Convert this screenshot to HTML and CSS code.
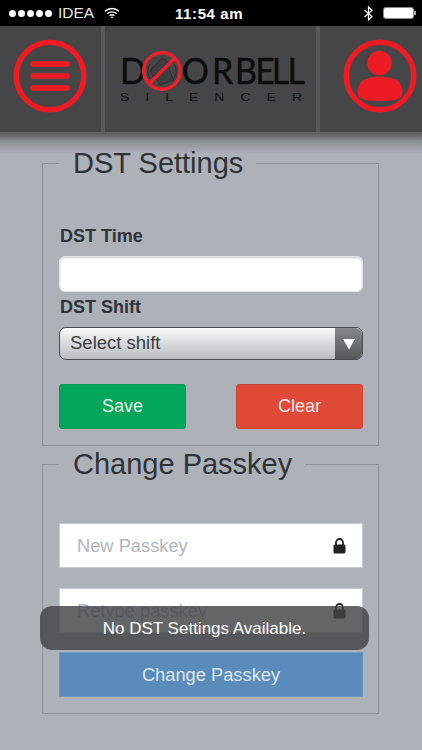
FILE: index.html
```html
<!DOCTYPE html>
<html lang="en">
<head>
<meta charset="utf-8">
<title>DST Settings</title>
<link rel="stylesheet" href="styles.css">
</head>
<body>
<div class="screen">
  <div class="status">
    <div class="status-left">
      <span class="dots"><i></i><i></i><i></i><i></i><i></i></span>
      <span class="carrier">IDEA</span>
      <svg class="wifi" width="16" height="12" viewBox="0 0 16 12"><path d="M1 4.200C5 .6 11 .6 15 4.200M3.300 6.600c2.700-2.400 6.700-2.400 9.400 0M5.600 8.800c1.400-1.200 3.400-1.200 4.800 0" fill="none" stroke="#fff" stroke-width="1.300"/><path d="M8 11.500 6.700 10.100c.8-.6 1.800-.6 2.600 0z" fill="#fff"/></svg>
    </div>
    <div class="clock">11:54 am</div>
    <div class="status-right">
      <svg width="11" height="15" viewBox="0 0 11 15"><path d="M1.500 4 9 10.500 5.500 14V1L9 4.500 1.500 11" fill="none" stroke="#fff" stroke-width="1.200"/></svg>
      <span class="battery"><span class="battery-fill"></span></span>
    </div>
  </div>

  <header class="topbar">
    <div class="tile tile-menu">
      <svg width="74" height="74" viewBox="0 0 74 74"><circle cx="37" cy="37" r="33.800" fill="none" stroke="#ed1c24" stroke-width="5.500"/><path d="M20 25h34M20 37h34M20 49h34" stroke="#ed1c24" stroke-width="5.500" stroke-linecap="round"/></svg>
    </div>
    <div class="tile tile-logo">
      <svg width="196" height="56" viewBox="0 0 196 56">
        <text class="logo-main" transform="scale(.92 1)" x="0 24 67 100 125 147 165 182" y="33">DOORBELL</text>
        <text class="logo-sub" transform="scale(1.4 1)" x="0" y="50" textLength="130">SILENCER</text>
        <circle cx="42" cy="20" r="18.200" fill="#464648"/>
        <g fill="none" stroke="#2f2f31" stroke-width="1">
          <path d="M42 7l5 3 4 14 3 5-14 5-3-5-7-9z" fill="#3e3e40"/>
          <path d="M33 15a11 11 0 0 0 0 11M30 13a15 15 0 0 0 0 15M54 13a12 12 0 0 1 0 14M57 11a16 16 0 0 1 0 18"/>
        </g>
        <circle cx="42" cy="20" r="18.200" fill="none" stroke="#ed2229" stroke-width="3.500"/>
        <path d="M29 33 55 7" stroke="#ed2229" stroke-width="3.500"/>
      </svg>
    </div>
    <div class="tile tile-user">
      <svg width="74" height="74" viewBox="0 0 74 74"><circle cx="37" cy="37" r="33.800" fill="none" stroke="#ed1c24" stroke-width="5.500"/><path d="M36.500 36c-5 3-9 2-14 4-5 2-8 7-8 13 0 4 3 7 8 8 9 1.500 20 1.500 29 0 5-1 8-4 8-8 0-6-3-11-8-13-5-2-10-1-15-4z" fill="#ed1c24"/><circle cx="36.500" cy="24" r="13" fill="#ed1c24" stroke="#464648" stroke-width="1.500"/></svg>
    </div>
  </header>
  <div class="bar-shadow"></div>

  <main class="content">
    <fieldset class="panel panel-dst">
      <legend>DST Settings</legend>
      <label class="field-label label-time" for="dst-time">DST Time</label>
      <input class="text-input" id="dst-time" type="text">
      <label class="field-label label-shift">DST Shift</label>
      <div class="select">
        <span class="select-value">Select shift</span>
        <span class="select-arrow"><svg width="14" height="12" viewBox="0 0 14 12"><path d="M1 1h12L7 11.500z" fill="#fff"/></svg></span>
      </div>
      <div class="actions">
        <button class="btn btn-save" type="button">Save</button>
        <button class="btn btn-clear" type="button">Clear</button>
      </div>
    </fieldset>

    <fieldset class="panel panel-pass">
      <legend>Change Passkey</legend>
      <div class="pass-row pass-first">
        <input class="pass-input" type="password" placeholder="New Passkey">
        <svg class="lock" width="13" height="16" viewBox="0 0 13 16"><path d="M3 7V4.500a3.500 3.500 0 0 1 7 0V7" fill="none" stroke="#222" stroke-width="1.800"/><rect x=".5" y="6.500" width="12" height="9" rx="1.500" fill="#222"/></svg>
      </div>
      <div class="pass-row">
        <input class="pass-input" type="password" placeholder="Retype passkey">
        <svg class="lock" width="13" height="16" viewBox="0 0 13 16"><path d="M3 7V4.500a3.500 3.500 0 0 1 7 0V7" fill="none" stroke="#222" stroke-width="1.800"/><rect x=".5" y="6.500" width="12" height="9" rx="1.500" fill="#222"/></svg>
      </div>
      <button class="btn-wide" type="button">Change Passkey</button>
    </fieldset>
  </main>

  <div class="toast">No DST Settings Available.</div>
</div>
</body>
</html>
```
FILE: styles.css
```css
* { box-sizing: border-box; }
html, body { margin: 0; padding: 0; }
body { width: 422px; height: 750px; overflow: hidden; font-family: "Liberation Sans", Arial, sans-serif; background: #adb1b8; }
.screen { position: relative; width: 422px; height: 750px; overflow: hidden; background: #adb1b8; }

.status { height: 26px; background: #000; color: #fff; display: flex; align-items: center; justify-content: space-between; padding: 0 9px 0 9px; position: relative; }
.status-left { display: flex; align-items: center; width: 150px; }
.dots { display: flex; gap: 2px; margin-right: 6px; }
.dots i { display: block; width: 7px; height: 7px; border-radius: 50%; background: #fff; }
.carrier { font-size: 15.500px; color: #e8e8e8; margin-right: 10px; }
.clock { font-size: 15px; font-weight: 700; letter-spacing: .6px; position: absolute; left: 175px; top: 5px; }
.status-right { display: flex; align-items: center; gap: 10px; }
.battery { display: block; width: 29px; height: 10px; border-radius: 2px; background: #fff; box-shadow: 0 0 0 1px #8a8a8a; position: relative; }
.battery::after { content: ""; position: absolute; right: -3px; top: 3px; width: 2px; height: 4px; background: #aaa; }
.battery-fill { display: block; }

.topbar { height: 106px; background: #59595b; display: grid; grid-template-columns: 101px 211px 1fr; column-gap: 4px; }
.tile { background: #464648; display: flex; align-items: center; padding-bottom: 6px; }
.tile-menu { padding-left: 12.500px; }
.tile-logo { padding-left: 15px; padding-bottom: 0; }
.tile-user { padding-left: 22.500px; }
.logo-main { font-family: Lato, "Liberation Sans", sans-serif; font-size: 37px; fill: #0d0d0f; stroke: #0d0d0f; stroke-width: .5px; }
.logo-sub { font-family: "Liberation Sans", sans-serif; font-size: 10px; fill: #101012; }
.bar-shadow { height: 24px; background: linear-gradient(#626264 0, #636365 3px, #8c8e92 9px, #adb1b8 22px); margin-bottom: -24px; position: relative; z-index: 1; }

.content { margin-top: 15px; padding: 0 43px 0 42px; position: relative; z-index: 2; }
.panel { margin: 0; padding: 0 15px 0 16px; border: 1px solid #8f9296; min-width: 0; position: relative; }
.panel legend { font-size: 29px; line-height: 32px; color: #2f3338; padding: 0 13px 0 14px; margin-left: 0; }
.panel-dst { height: 299px; }
.panel-pass { height: 266px; margin-top: 2px; }

.field-label { display: block; font-size: 18px; font-weight: 700; line-height: 20px; color: #2f3338; padding-left: 1px; }
.label-time { margin-top: 47px; }
.label-shift { margin-top: 5px; }
.text-input { display: block; width: 100%; height: 36px; margin: 10px 0 0; border: 1px solid #e2e4e7; border-radius: 6px; background: #fff; box-shadow: inset 0 1px 2px #ccc; padding: 0; }
.select { display: flex; height: 33px; margin-top: 10px; border: 1px solid #4a4b4e; border-radius: 7px; overflow: hidden; background: linear-gradient(#fbfbfb, #d8d9dc 50%, #bcbdc1); }
.select-value { flex: 1; font-size: 18.500px; line-height: 30px; color: #3a3c40; padding-left: 10px; }
.select-arrow { width: 27px; display: flex; align-items: center; justify-content: center; background: linear-gradient(#87888a, #57585b); }
.actions { display: flex; justify-content: space-between; margin-top: 24px; }
.btn { width: 127px; height: 45px; border-radius: 3px; border: 1px solid transparent; font: 18px "Liberation Sans", Arial, sans-serif; padding: 0; }
.btn-save { background: #00a65a; border-color: #089a57; color: #e6f7ec; }
.btn-clear { background: #df4a38; border-color: #d04536; color: #fbe6e2; }

.pass-row { display: flex; align-items: center; height: 45px; background: #fff; border: 1px solid #c9ccd3; margin-bottom: 19px; padding: 0 16px 0 17px; }
.pass-first { margin-top: 43px; margin-bottom: 20px; }
.pass-input { flex: 1; min-width: 0; border: 0; background: transparent; font: 18.300px "Liberation Sans", Arial, sans-serif; padding: 0; outline: 0; }
.pass-input::placeholder { color: #b4b6ba; opacity: 1; }
.btn-wide { display: block; width: 100%; height: 45px; border: 1px solid #6d95bd; background: #5a8bbb; color: #dde8f2; font: 18.300px "Liberation Sans", Arial, sans-serif; padding: 0; }

.toast { position: absolute; left: 40px; top: 606px; width: 329px; height: 44px; border-radius: 12px; background: rgba(66, 67, 70, .82); color: #fff; font-size: 17px; line-height: 45px; text-align: center; z-index: 5; }
```
